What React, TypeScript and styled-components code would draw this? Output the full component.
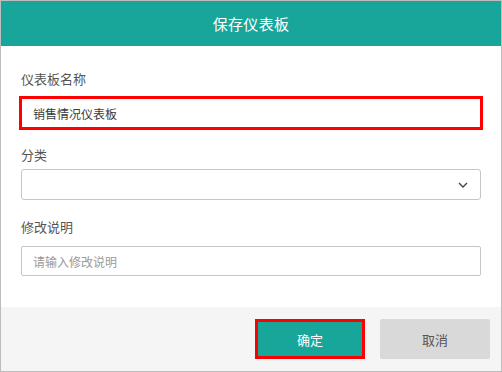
import React from 'react'
import styled, { createGlobalStyle } from 'styled-components'

const GlobalStyle = createGlobalStyle`
  html, body {
    margin: 0;
    padding: 0;
    background: #fff;
  }
  body {
    font-family: "Noto Sans CJK SC", "Noto Sans", "Liberation Sans", sans-serif;
  }
`

const Dialog = styled.div`
  width: 502px;
  height: 372px;
  box-sizing: border-box;
  border: 1px solid #bdbdbd;
  display: flex;
  flex-direction: column;
  background: #fff;
`

const Header = styled.div`
  height: 45px;
  flex: none;
  background: #19a69a;
  color: #fff;
  font-size: 15px;
  display: flex;
  align-items: center;
  justify-content: center;
  letter-spacing: 0.3px;
`

const Body = styled.div`
  flex: 1;
  padding: 23px 20px 0 20px;
  display: flex;
  flex-direction: column;
`

interface FieldProps {
  top?: number
}

const Field = styled.div<FieldProps>`
  display: flex;
  flex-direction: column;
  margin-top: ${props => props.top || 0}px;
`

interface LabelProps {
  gap?: number
}

const Label = styled.div<LabelProps>`
  font-size: 13px;
  line-height: 20px;
  color: #555;
  margin-bottom: ${props => (props.gap === undefined ? 9 : props.gap)}px;
`

interface InputProps {
  highlighted?: boolean
}

const Input = styled.input<InputProps>`
  box-sizing: border-box;
  width: 100%;
  height: 30px;
  border: 1px solid #c6c6c6;
  border-radius: ${props => (props.highlighted ? 0 : 2)}px;
  padding: 0 11px;
  font-family: inherit;
  font-size: 12px;
  color: #3a3a3a;
  background: #fff;
  outline: ${props => (props.highlighted ? '3px solid #ff0000' : 'none')};
  outline-offset: -1px;

  &::placeholder {
    color: #9a9a9a;
  }
`

const SelectBox = styled.div`
  box-sizing: border-box;
  height: 31px;
  border: 1px solid #c6c6c6;
  border-radius: 3px;
  display: flex;
  align-items: center;
  justify-content: flex-end;
  padding-right: 12px;
`

const Footer = styled.div`
  height: 64px;
  flex: none;
  background: #f5f5f5;
  display: flex;
  align-items: center;
  justify-content: flex-end;
  gap: 15px;
  padding-right: 11px;
`

interface ButtonProps {
  primary?: boolean
}

const Button = styled.button<ButtonProps>`
  box-sizing: border-box;
  width: 110px;
  height: 40px;
  border: none;
  border-radius: ${props => (props.primary ? 0 : 2)}px;
  font-family: inherit;
  font-size: 13px;
  cursor: pointer;
  background: ${props => (props.primary ? '#19a69a' : '#d9d9d9')};
  color: ${props => (props.primary ? '#fff' : '#555')};
  outline: ${props => (props.primary ? '3px solid #ff0000' : 'none')};
  outline-offset: -3px;
`

const Chevron = () => (
  <svg width="10" height="6" viewBox="0 0 10 6">
    <polyline points="1,1 5,5 9,1" fill="none" stroke="#444" strokeWidth="1.4" />
  </svg>
)

export default function App() {
  return (
    <>
      <GlobalStyle />
      <Dialog>
        <Header>保存仪表板</Header>
        <Body>
          <Field>
            <Label>仪表板名称</Label>
            <Input highlighted defaultValue="销售情况仪表板" />
          </Field>
          <Field top={17}>
            <Label gap={4}>分类</Label>
            <SelectBox>
              <Chevron />
            </SelectBox>
          </Field>
          <Field top={17}>
            <Label>修改说明</Label>
            <Input placeholder="请输入修改说明" />
          </Field>
        </Body>
        <Footer>
          <Button primary>确定</Button>
          <Button>取消</Button>
        </Footer>
      </Dialog>
    </>
  )
}
